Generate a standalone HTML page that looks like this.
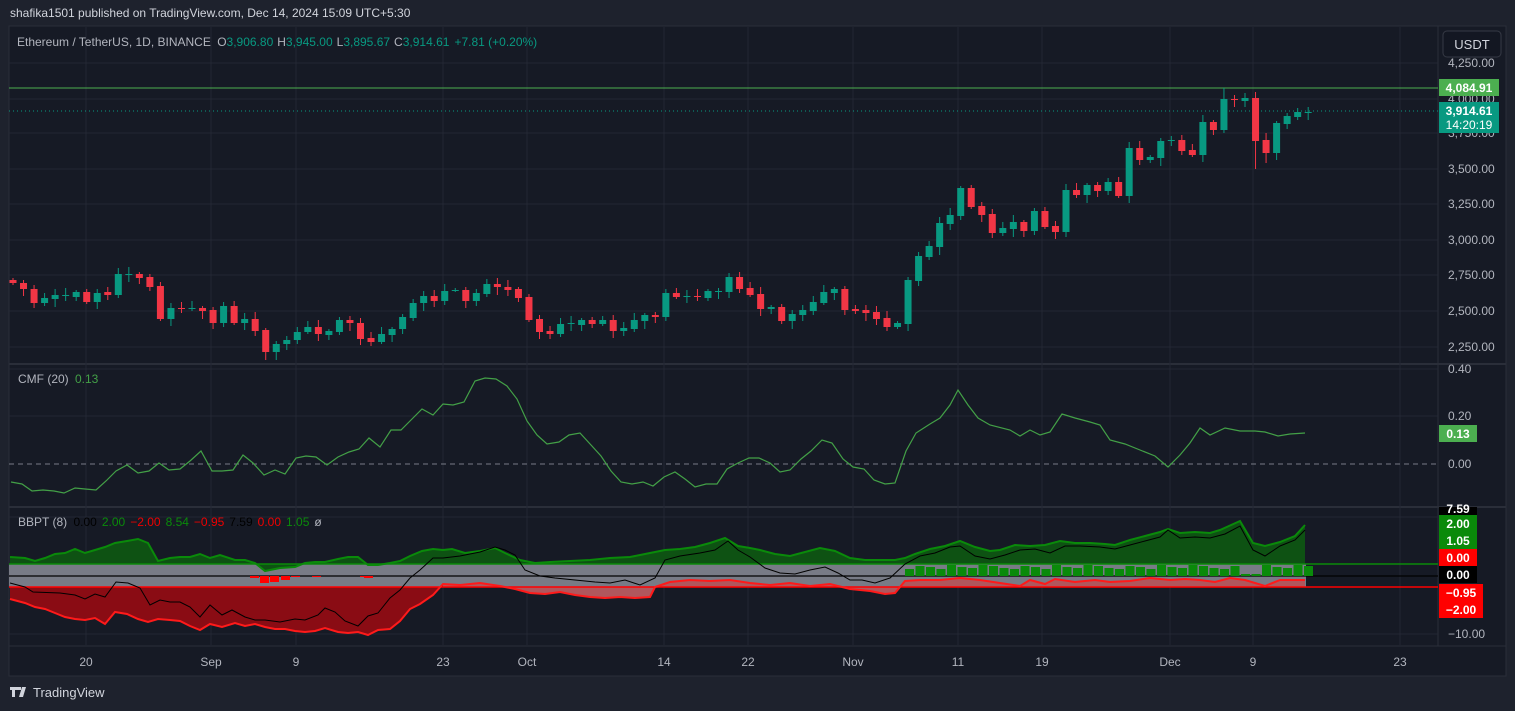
<!DOCTYPE html>
<html><head><meta charset="utf-8">
<style>
html,body{margin:0;padding:0;background:#1e222d;width:1515px;height:711px;overflow:hidden;font-family:"Liberation Sans",Arial,sans-serif;}
svg{position:absolute;left:0;top:0}
text{font-family:"Liberation Sans",Arial,sans-serif}
</style></head><body>
<svg id="s" width="1515" height="711" xmlns="http://www.w3.org/2000/svg">
<rect x="0" y="0" width="1515" height="711" fill="#1e222d"/>
<rect x="9" y="26" width="1497" height="650" fill="#161a25" stroke="#2a2e39" stroke-width="1"/>
<line x1="1438" y1="26" x2="1438" y2="646" stroke="#2a2e39"/>
<line x1="9" y1="646" x2="1506" y2="646" stroke="#2a2e39"/>
<line x1="9" y1="364" x2="1506" y2="364" stroke="#2a2e39" stroke-width="2"/>
<line x1="9" y1="507" x2="1506" y2="507" stroke="#2a2e39" stroke-width="2"/>
<g id="grid" stroke="#232734" stroke-width="1"></g>
<g id="plot"></g>
<text x="10" y="17" fill="#d1d4dc" font-size="12">shafika1501 published on TradingView.com, Dec 14, 2024 15:09 UTC+5:30</text>
<text x="17" y="46" font-size="12" fill="#b2b5be">Ethereum / TetherUS, 1D, BINANCE <tspan dx="3">O</tspan><tspan fill="#089981">3,906.80</tspan><tspan dx="4">H</tspan><tspan fill="#089981">3,945.00</tspan><tspan dx="4">L</tspan><tspan fill="#089981">3,895.67</tspan><tspan dx="4">C</tspan><tspan fill="#089981">3,914.61</tspan><tspan dx="5" fill="#089981">+7.81 (+0.20%)</tspan></text>
<text x="18" y="383" font-size="12" fill="#b2b5be">CMF (20) <tspan dx="3" fill="#43a047">0.13</tspan></text>
<text x="18" y="526" font-size="12" fill="#b2b5be">BBPT (8) <tspan dx="3" fill="#000">0.00</tspan><tspan dx="5" fill="#0a8a0a">2.00</tspan><tspan dx="5" fill="#e00">−2.00</tspan><tspan dx="5" fill="#0a8a0a">8.54</tspan><tspan dx="5" fill="#e00">−0.95</tspan><tspan dx="5" fill="#000">7.59</tspan><tspan dx="5" fill="#e00">0.00</tspan><tspan dx="5" fill="#0a8a0a">1.05</tspan><tspan dx="5" fill="#b2b5be">ø</tspan></text>
<rect x="1443" y="31" width="58" height="26" rx="4" fill="#131722" stroke="#363a45"/>
<text x="1472" y="49" font-size="13" fill="#d1d4dc" text-anchor="middle">USDT</text>
<g font-size="12" fill="#b2b5be" id="axis"></g>
<rect x="1439" y="79" width="60" height="17" fill="#4caf50"/>
<text x="1469" y="92" font-size="12" font-weight="bold" fill="#fff" text-anchor="middle">4,084.91</text>
<rect x="1439" y="102" width="60" height="31" fill="#089981"/>
<text x="1469" y="115" font-size="12" font-weight="bold" fill="#fff" text-anchor="middle">3,914.61</text>
<text x="1469" y="129" font-size="12" fill="#fff" text-anchor="middle">14:20:19</text>
<rect x="1439" y="425" width="38" height="17" fill="#4caf50"/>
<text x="1458" y="438" font-size="12" font-weight="bold" fill="#fff" text-anchor="middle">0.13</text>
<rect x="1439" y="507" width="38" height="8" fill="#000"/>
<text x="1458" y="513" font-size="12" font-weight="bold" fill="#fff" text-anchor="middle">7.59</text>
<rect x="1439" y="515" width="38" height="34" fill="#0a8a0a"/>
<text x="1458" y="528" font-size="12" font-weight="bold" fill="#fff" text-anchor="middle">2.00</text>
<text x="1458" y="545" font-size="12" font-weight="bold" fill="#fff" text-anchor="middle">1.05</text>
<rect x="1439" y="549" width="38" height="17" fill="#ff0000"/>
<text x="1458" y="562" font-size="12" font-weight="bold" fill="#fff" text-anchor="middle">0.00</text>
<rect x="1439" y="566" width="38" height="17" fill="#000"/>
<text x="1458" y="579" font-size="12" font-weight="bold" fill="#fff" text-anchor="middle">0.00</text>
<rect x="1439" y="584" width="44" height="34" fill="#ff0000"/>
<text x="1461" y="597" font-size="12" font-weight="bold" fill="#fff" text-anchor="middle">−0.95</text>
<text x="1461" y="614" font-size="12" font-weight="bold" fill="#fff" text-anchor="middle">−2.00</text>
<text x="1448" y="638" font-size="12" fill="#b2b5be">−10.00</text>
<g font-size="12" fill="#b2b5be" text-anchor="middle" id="taxis"></g>
<g transform="translate(10,686)" fill="#d1d4dc">
<path d="M0 1h8v3H5v7H2V4H0z M8 1h3v3H8z M12 1h4l-3 10H9z"/>
</g>
<text x="33" y="697" font-size="13" fill="#d1d4dc">TradingView</text>
</svg>
<script>
var NS="http://www.w3.org/2000/svg";
function el(p,t,a){var e=document.createElementNS(NS,t);for(var k in a)e.setAttribute(k,a[k]);p.appendChild(e);return e;}
var grid=document.getElementById('grid'),plot=document.getElementById('plot'),axis=document.getElementById('axis'),taxis=document.getElementById('taxis');
var tl=[[86,"20"],[211,"Sep"],[296,"9"],[443,"23"],[527,"Oct"],[664,"14"],[748,"22"],[853,"Nov"],[958,"11"],[1042,"19"],[1170,"Dec"],[1253,"9"],[1400,"23"]];
tl.forEach(function(t){el(grid,'line',{x1:t[0],y1:27,x2:t[0],y2:645});var tx=el(taxis,'text',{x:t[0],y:666});tx.textContent=t[1];});
var pl=[[63,"4,250.00"],[99,"4,000.00"],[133,"3,750.00"],[169,"3,500.00"],[204,"3,250.00"],[240,"3,000.00"],[275,"2,750.00"],[311,"2,500.00"],[347,"2,250.00"]];
pl.forEach(function(p){el(grid,'line',{x1:9,y1:p[0],x2:1438,y2:p[0]});var tx=el(axis,'text',{x:1448,y:p[0]+4});tx.textContent=p[1];});
[[369,"0.40"],[416,"0.20"],[464,"0.00"]].forEach(function(p){if(p[0]!=464)el(grid,'line',{x1:9,y1:p[0],x2:1438,y2:p[0]});var tx=el(axis,'text',{x:1448,y:p[0]+4});tx.textContent=p[1];});
el(grid,'line',{x1:9,y1:517,x2:1438,y2:517});el(grid,'line',{x1:9,y1:634,x2:1438,y2:634});
var C=[[280,283,0],[283,289,0],[289,303,0],[298,303,1],[295,299,1],[295,295,1],[292,297,1],[292,302,0],[293,302,1],[292,295,0],[274,295,1],[274,274,1],[274,278,0],[277,287,0],[286,319,0],[308,319,1],[308,308,0],[308,308,1],[308,311,0],[310,323,0],[306,323,1],[306,323,0],[319,323,1],[319,331,0],[330,352,0],[344,352,1],[340,344,1],[332,340,1],[327,332,1],[327,334,0],[331,335,1],[320,332,1],[320,323,0],[323,339,0],[338,342,0],[334,342,1],[329,335,1],[317,329,1],[303,318,1],[296,303,1],[296,301,0],[291,301,1],[290,290,1],[290,301,0],[293,301,1],[284,294,1],[284,287,0],[287,290,0],[289,298,0],[297,320,0],[319,332,0],[331,334,0],[324,334,1],[323,323,1],[320,325,1],[320,324,0],[320,324,1],[320,331,0],[328,331,1],[320,329,1],[315,321,1],[315,317,0],[293,317,1],[293,297,0],[296,296,1],[296,296,0],[291,298,1],[291,291,1],[277,292,1],[277,289,0],[288,295,0],[294,309,0],[307,309,1],[307,321,0],[314,321,1],[310,315,1],[302,311,1],[292,303,1],[289,293,1],[289,310,0],[309,311,0],[310,313,0],[312,319,0],[318,327,0],[323,327,1],[280,324,1],[256,281,1],[246,257,1],[223,247,1],[215,224,1],[188,216,1],[188,207,0],[206,215,0],[214,233,0],[228,233,1],[222,229,1],[222,231,0],[211,231,1],[211,227,0],[226,232,0],[190,232,1],[190,195,0],[185,195,1],[185,191,0],[182,191,1],[182,196,0],[148,196,1],[148,160,0],[157,160,1],[141,158,1],[140,140,1],[140,151,0],[150,155,0],[122,155,1],[122,130,0],[99,130,1],[99,99,0],[98,101,1],[98,141,0],[140,153,0],[123,153,1],[116,124,1],[112,117,1],[112,112,1]];
el(plot,'line',{x1:9,y1:88,x2:1438,y2:88,stroke:'#4caf50','stroke-width':1});
el(plot,'line',{x1:9,y1:111,x2:1438,y2:111,stroke:'#089981','stroke-width':1,'stroke-dasharray':'1,3'});
el(plot,'line',{x1:9,y1:464,x2:1438,y2:464,stroke:'#787b86','stroke-width':1,'stroke-dasharray':'5,4'});
C.forEach(function(c,i){var x=13+i*10.53,col=c[2]?'#089981':'#f23645';var a=2+(i*7)%6,b=2+(i*5)%7;var t=c[0]-a,bt=c[1]+b;
 if(i==115)t=88;if(i==118)bt=169;if(i==119)bt=163;if(i==24)bt=360;
 el(plot,'line',{x1:x,y1:t,x2:x,y2:bt,stroke:col,'stroke-width':1});
 el(plot,'rect',{x:x-3.5,y:c[0],width:7,height:Math.max(1,c[1]-c[0]),fill:col});});
function pts(a){return a.map(function(p){return p[0]+','+p[1]}).join(' ');}
var cmf=[[11,482],[22,484],[32,491],[43,490],[54,491],[64,493],[75,488],[85,489],[96,490],[106,481],[116,471],[127,465],[138,473],[149,471],[159,463],[169,470],[180,469],[190,461],[201,451],[212,471],[222,471],[233,470],[243,455],[253,463],[264,475],[275,470],[285,474],[296,458],[306,456],[316,457],[327,465],[338,457],[349,452],[359,449],[369,438],[380,447],[391,430],[401,430],[411,420],[422,409],[433,415],[443,404],[453,405],[464,402],[475,381],[485,378],[496,379],[507,386],[517,399],[527,421],[537,435],[547,444],[559,442],[569,435],[580,433],[591,445],[601,456],[611,471],[621,482],[632,484],[643,482],[653,486],[664,477],[675,472],[685,479],[695,487],[706,484],[717,484],[727,469],[738,463],[749,458],[759,458],[770,463],[780,472],[790,470],[801,459],[811,451],[822,440],[832,443],[843,459],[853,467],[864,469],[874,480],[885,484],[895,483],[906,451],[916,433],[930,424],[940,418],[950,405],[958,390],[968,405],[978,418],[990,425],[1010,430],[1020,436],[1030,430],[1040,435],[1050,432],[1062,414],[1075,418],[1090,422],[1100,425],[1110,440],[1125,444],[1140,450],[1155,456],[1168,467],[1180,455],[1190,443],[1200,428],[1210,435],[1225,428],[1240,431],[1255,431],[1265,432],[1278,436],[1290,434],[1305,433]];
el(plot,'polyline',{points:pts(cmf),fill:'none',stroke:'#43a047','stroke-width':1.2});
el(plot,'rect',{x:9,y:564,width:1297,height:23,fill:'#787b86'});
var up=[[10,557],[25,558],[35,561],[45,558],[55,554],[65,553],[75,549],[85,553],[95,550],[105,547],[115,543],[127,541],[138,539],[148,543],[158,561],[170,558],[180,557],[190,557],[200,554],[210,558],[220,555],[235,560],[245,560],[255,563],[265,571],[280,568],[295,567],[305,563],[315,562],[325,562],[338,559],[348,557],[358,557],[368,565],[378,565],[390,563],[400,561],[410,556],[422,551],[433,549],[443,550],[452,549],[465,553],[480,551],[495,548],[505,553],[520,560],[535,563],[550,562],[570,561],[590,560],[610,558],[630,557],[650,553],[665,550],[680,549],[695,547],[710,543],[725,538],[738,546],[750,548],[760,550],[775,554],[790,556],[805,552],[820,548],[835,551],[850,558],[865,560],[880,560],[895,560],[905,558],[915,554],[930,549],[945,546],[960,541],[975,547],[990,551],[1000,550],[1015,545],[1030,546],[1045,545],[1060,541],[1075,543],[1090,543],[1105,544],[1115,545],[1130,540],[1145,536],[1160,532],[1168,529],[1180,533],[1195,532],[1210,533],[1220,530],[1240,521],[1253,543],[1265,546],[1280,542],[1295,536],[1305,525]];
el(plot,'polygon',{points:'10,564 '+pts(up)+' 1305,564',fill:'#0e5213'});
var lo=[[10,599],[25,603],[35,607],[45,609],[55,613],[65,617],[75,619],[85,620],[95,618],[105,624],[115,612],[127,614],[138,619],[148,622],[158,619],[170,620],[180,621],[190,626],[200,630],[210,624],[222,627],[235,623],[245,626],[255,624],[265,627],[275,629],[285,629],[295,631],[305,632],[315,631],[325,628],[338,632],[348,633],[358,632],[368,635],[378,630],[390,629],[400,621],[410,609],[420,604],[433,595],[443,584],[460,585],[480,583],[500,586],[515,589],[530,593],[545,594],[560,592],[575,595],[590,597],[605,598],[620,597],[635,598],[650,597],[655,587],[670,582],[690,580],[710,581],[730,580],[750,583],[770,585],[790,583],[810,586],[830,584],[850,589],[870,591],[885,594],[895,593],[905,581],[920,580],[940,580],[960,578],[980,580],[1000,583],[1020,586],[1030,580],[1045,584],[1055,579],[1075,582],[1095,580],[1110,582],[1130,581],[1150,578],[1170,580],[1185,579],[1200,580],[1215,582],[1230,578],[1245,580],[1265,586],[1280,580],[1305,580]];
el(plot,'polygon',{points:'10,587 '+pts(lo)+' 1305,587',fill:'#8a0c14'});
el(plot,'polygon',{points:'443,587 '+pts(lo.filter(function(p){return p[0]>=443}))+' 1305,587',fill:'#c98a8e',opacity:0.6});
el(plot,'line',{x1:9,y1:564,x2:1438,y2:564,stroke:'#0a8a0a','stroke-width':1.5});
el(plot,'line',{x1:9,y1:587,x2:1438,y2:587,stroke:'#ff0000','stroke-width':1.5});
el(plot,'line',{x1:9,y1:576,x2:1438,y2:576,stroke:'#000','stroke-width':1.2});
[[250,2],[260,7],[270,6],[281,4],[291,1],[312,1],[360,1],[364,2]].forEach(function(h){el(plot,'rect',{x:h[0],y:576,width:9,height:h[1],fill:'#ff0000'});});
for(var x=905;x<1306;x+=10.5){var hh=7+((x*7)|0)%5;if(x>1240&&x<1262)hh=2;el(plot,'rect',{x:x,y:576-hh,width:9,height:hh,fill:'#0a8a0a'});}
el(plot,'polyline',{points:pts(up),fill:'none',stroke:'#0a8a0a','stroke-width':2});
el(plot,'polyline',{points:pts(lo),fill:'none',stroke:'#ff1a1a','stroke-width':2});
var bl=[[10,583],[25,587],[33,592],[60,593],[75,595],[85,599],[95,594],[105,597],[116,582],[128,583],[140,588],[150,605],[160,600],[170,602],[180,602],[190,607],[200,617],[210,605],[222,615],[232,610],[245,617],[255,620],[265,620],[280,622],[295,619],[305,620],[318,615],[325,608],[335,612],[345,621],[358,626],[368,616],[378,613],[390,598],[400,590],[410,578],[420,570],[433,558],[443,558],[460,556],[480,552],[495,547],[505,550],[515,555],[525,570],[540,576],[555,578],[575,580],[595,582],[610,583],[625,580],[640,585],[655,578],[665,560],[680,556],[700,553],[715,550],[728,541],[738,550],[750,557],[765,568],[780,573],[795,574],[810,570],[825,567],[838,573],[850,580],[862,580],[875,583],[890,578],[905,564],[920,556],[935,553],[950,547],[960,546],[975,556],[990,559],[1005,555],[1020,550],[1035,549],[1050,553],[1065,546],[1080,546],[1100,547],[1115,549],[1130,545],[1145,541],[1160,537],[1168,530],[1180,538],[1195,537],[1210,538],[1225,534],[1240,526],[1253,550],[1265,556],[1280,546],[1295,540],[1305,530]];
el(plot,'polyline',{points:pts(bl),fill:'none',stroke:'#000','stroke-width':1});
</script>
</body></html>
